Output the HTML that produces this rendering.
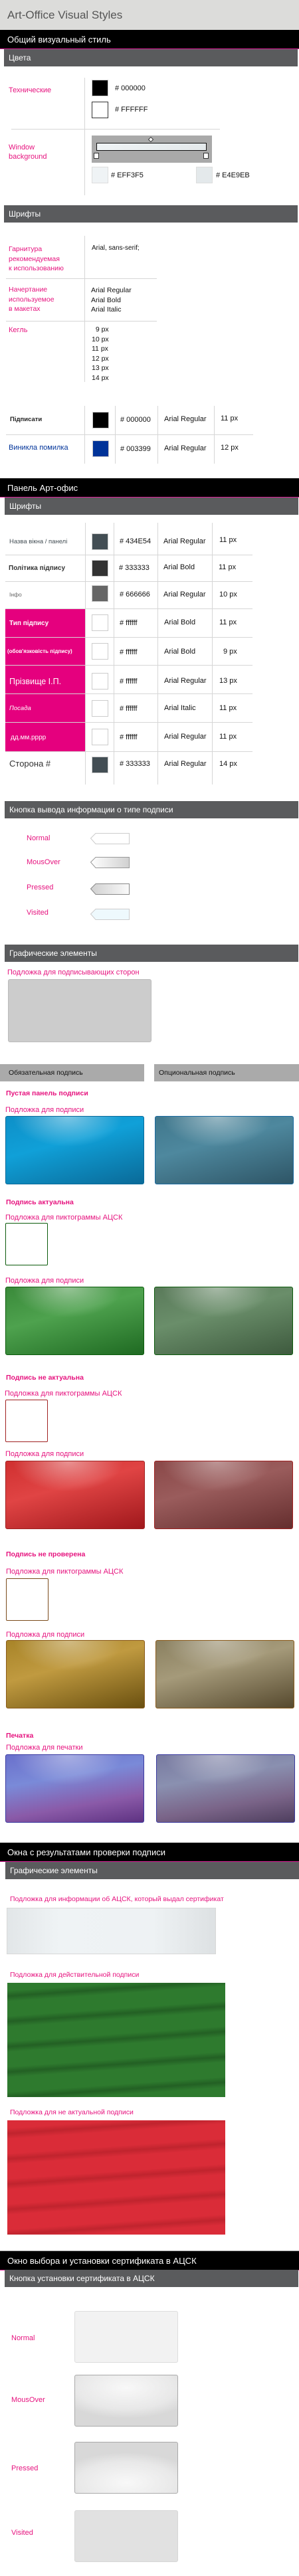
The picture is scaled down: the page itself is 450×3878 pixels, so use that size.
<!DOCTYPE html>
<html><head><meta charset="utf-8">
<style>
*{margin:0;padding:0;box-sizing:border-box}
body{width:450px;height:3878px;position:relative;background:#fff;font-family:"Liberation Sans","DejaVu Sans",sans-serif;overflow:hidden}
div{position:absolute}
.t{line-height:16px;white-space:nowrap;font-size:11px;color:#111}
.p{color:#e6127e}
.blk{left:0;width:450px;height:29px;background:#000;color:#fff;font-size:13px;line-height:29px;padding-left:11px;border-bottom:1px solid #e0209a}
.gr{left:6px;width:442px;height:26px;background:#5a5b5d;color:#fff;font-size:12px;line-height:26px;padding-left:7px}
.vl{width:1px;background:#d6d6d6}
.hl{height:1px;background:#d6d6d6}
.sw{width:25px;height:25px;border:1px solid #ccc}
.gl{border-radius:3px;width:209px;height:103px}
.pk{left:8px;width:120px;background:#e5007e;color:#fff}
.ab{width:156px;height:78px;border-radius:3px}
</style></head><body>

<div style="left:0;top:0;width:450px;height:45px;background:#dcdcda"></div>
<div class="t" style="left:11px;top:12px;font-size:17px;line-height:22px;color:#555">Art-Office Visual Styles</div>
<div class="blk" style="top:45px">Общий визуальный стиль</div>
<div class="gr" style="top:74px">Цвета</div>

<div class="t p" style="left:13px;top:128px;font-size:11px">Технические</div>
<div class="vl" style="left:127px;top:117px;height:177px"></div>
<div class="sw" style="left:138px;top:120px;background:#000"></div>
<div class="t" style="left:173px;top:125px">#&nbsp;000000</div>
<div class="sw" style="left:138px;top:153px;background:#fff;border-color:#333"></div>
<div class="t" style="left:173px;top:157px">#&nbsp;FFFFFF</div>
<div class="hl" style="left:17px;top:194px;width:314px"></div>
<div style="left:138px;top:204px;width:181px;height:41px;background:#a9a9a9"></div>
<div style="left:145px;top:215px;width:166px;height:12px;background:linear-gradient(90deg,#eff3f5,#e4e9eb);border:1px solid #111"></div>
<div style="left:224px;top:207px;width:6px;height:6px;background:#fff;border:1px solid #333;transform:rotate(45deg)"></div>
<div style="left:141px;top:230px;width:8px;height:9px;background:#fff;border:1px solid #333"></div>
<div style="left:306px;top:230px;width:8px;height:9px;background:#fff;border:1px solid #333"></div>
<div class="t p" style="left:13px;top:215px;font-size:11px;line-height:14px">Window<br>background</div>
<div class="sw" style="left:138px;top:251px;background:#eff3f5;border-color:#ddd"></div>
<div class="t" style="left:167px;top:256px">#&nbsp;EFF3F5</div>
<div class="sw" style="left:295px;top:251px;background:#e4e9eb;border-color:#ddd"></div>
<div class="t" style="left:325px;top:256px">#&nbsp;E4E9EB</div>

<div class="gr" style="top:309px">Шрифты</div>
<div class="vl" style="left:127px;top:355px;height:220px"></div>
<div class="t p" style="left:13px;top:368px;line-height:14.5px;font-size:10.5px">Гарнитура<br>рекомендуемая<br>к использованию</div>
<div class="t" style="left:138px;top:366px;font-size:10px">Arial, sans-serif;</div>
<div class="hl" style="left:9px;top:419px;width:227px"></div>
<div class="t p" style="left:13px;top:429px;line-height:14.5px;font-size:10.5px">Начертание<br>используемое<br>в макетах</div>
<div class="t" style="left:137px;top:430px;line-height:14.5px;font-size:10.5px">Arial Regular<br>Arial Bold<br>Arial Italic</div>
<div class="hl" style="left:9px;top:483px;width:227px"></div>
<div class="t p" style="left:13px;top:489px;font-size:11px">Кегль</div>
<div class="t" style="left:138px;top:489px;line-height:14.5px;font-size:10.5px">&nbsp;&nbsp;9 px<br>10 px<br>11 px<br>12 px<br>13 px<br>14 px</div>

<div class="vl" style="left:127px;top:611px;height:87px"></div>
<div class="vl" style="left:173px;top:611px;height:87px"></div>
<div class="vl" style="left:237px;top:611px;height:87px"></div>
<div class="vl" style="left:322px;top:611px;height:87px"></div>
<div class="hl" style="left:9px;top:654px;width:372px"></div>
<div class="t" style="left:15px;top:624px;font-size:9.5px;font-weight:bold;color:#222">Підписати</div>
<div class="sw" style="left:139px;top:620px;background:#000"></div>
<div class="t" style="left:181px;top:624px">#&nbsp;000000</div>
<div class="t" style="left:247px;top:623px">Arial Regular</div>
<div class="t" style="left:332px;top:622px">11 px</div>
<div class="t" style="left:13px;top:666px;color:#003399">Виникла помилка</div>
<div class="sw" style="left:139px;top:663px;background:#003399"></div>
<div class="t" style="left:181px;top:668px">#&nbsp;003399</div>
<div class="t" style="left:247px;top:667px">Arial Regular</div>
<div class="t" style="left:332px;top:666px">12 px</div>

<div class="blk" style="top:720px">Панель Арт-офис</div>
<div class="gr" style="top:749px;left:7px">Шрифты</div>

<div class="pk" style="top:916px;height:215px"></div>
<div class="vl" style="left:128px;top:787px;height:394px"></div>
<div class="vl" style="left:171px;top:787px;height:394px"></div>
<div class="vl" style="left:237px;top:787px;height:394px"></div>
<div class="vl" style="left:319px;top:787px;height:394px"></div>
<div class="hl" style="left:8px;top:835px;width:372px"></div>
<div class="hl" style="left:8px;top:875px;width:372px"></div>
<div class="hl" style="left:8px;top:916px;width:372px"></div>
<div class="hl" style="left:8px;top:959px;width:372px"></div>
<div class="hl" style="left:8px;top:1001px;width:372px"></div>
<div class="hl" style="left:8px;top:1044px;width:372px"></div>
<div class="hl" style="left:8px;top:1087px;width:372px"></div>
<div class="hl" style="left:8px;top:1131px;width:372px"></div>

<div class="t" style="left:14px;top:808px;font-size:9.5px;color:#434e54">Назва вікна / панелі</div>
<div class="t" style="left:13px;top:848px;font-size:10px;font-weight:bold;color:#333">Політика підпису</div>
<div class="t" style="left:14px;top:887px;font-size:8.5px;color:#666">Інфо</div>
<div class="t" style="left:14px;top:931px;font-size:10px;font-weight:bold;color:#fff">Тип підпису</div>
<div class="t" style="left:11px;top:973px;font-size:8px;font-weight:bold;color:#fff">(обов'язковість підпису)</div>
<div class="t" style="left:14px;top:1018px;font-size:12.5px;color:#fff">Прізвище І.П.</div>
<div class="t" style="left:14px;top:1059px;font-size:9.5px;font-style:italic;color:#fff">Посада</div>
<div class="t" style="left:16px;top:1103px;font-size:10px;color:#fff">дд.мм.рррр</div>
<div class="t" style="left:14px;top:1142px;font-size:13px;color:#333">Сторона #</div>

<div class="sw" style="left:138px;top:803px;background:#434e54"></div>
<div class="sw" style="left:138px;top:843px;background:#333"></div>
<div class="sw" style="left:138px;top:881px;background:#666"></div>
<div class="sw" style="left:138px;top:925px;background:#fff"></div>
<div class="sw" style="left:138px;top:968px;background:#fff"></div>
<div class="sw" style="left:138px;top:1013px;background:#fff"></div>
<div class="sw" style="left:138px;top:1054px;background:#fff"></div>
<div class="sw" style="left:138px;top:1097px;background:#fff"></div>
<div class="sw" style="left:138px;top:1139px;background:#434e54"></div>

<div class="t" style="left:180px;top:807px">#&nbsp;434E54</div>
<div class="t" style="left:179px;top:847px">#&nbsp;333333</div>
<div class="t" style="left:180px;top:887px">#&nbsp;666666</div>
<div class="t" style="left:180px;top:930px">#&nbsp;ffffff</div>
<div class="t" style="left:180px;top:974px">#&nbsp;ffffff</div>
<div class="t" style="left:180px;top:1018px">#&nbsp;ffffff</div>
<div class="t" style="left:180px;top:1059px">#&nbsp;ffffff</div>
<div class="t" style="left:180px;top:1102px">#&nbsp;ffffff</div>
<div class="t" style="left:180px;top:1142px">#&nbsp;333333</div>

<div class="t" style="left:246px;top:807px">Arial Regular</div>
<div class="t" style="left:246px;top:846px">Arial Bold</div>
<div class="t" style="left:246px;top:887px">Arial Regular</div>
<div class="t" style="left:247px;top:929px">Arial Bold</div>
<div class="t" style="left:247px;top:973px">Arial Bold</div>
<div class="t" style="left:247px;top:1017px">Arial Regular</div>
<div class="t" style="left:247px;top:1058px">Arial Italic</div>
<div class="t" style="left:247px;top:1101px">Arial Regular</div>
<div class="t" style="left:247px;top:1142px">Arial Regular</div>

<div class="t" style="left:330px;top:805px">11 px</div>
<div class="t" style="left:329px;top:846px">11 px</div>
<div class="t" style="left:330px;top:887px">10 px</div>
<div class="t" style="left:330px;top:929px">11 px</div>
<div class="t" style="left:336px;top:973px">9 px</div>
<div class="t" style="left:330px;top:1017px">13 px</div>
<div class="t" style="left:330px;top:1058px">11 px</div>
<div class="t" style="left:330px;top:1101px">11 px</div>
<div class="t" style="left:330px;top:1142px">14 px</div>

<div class="gr" style="top:1206px;left:7px">Кнопка вывода информации о типе подписи</div>
<div class="t p" style="left:40px;top:1254px">Normal</div>
<div class="t p" style="left:40px;top:1290px">MousOver</div>
<div class="t p" style="left:40px;top:1328px">Pressed</div>
<div class="t p" style="left:40px;top:1366px">Visited</div>
<svg style="position:absolute;left:134px;top:1252px" width="64" height="140">
<defs>
<linearGradient id="bm" x1="0" x2="1"><stop offset="0" stop-color="#fff"/><stop offset="1" stop-color="#d0d0d0"/></linearGradient>
<linearGradient id="bp" x1="0" x2="1"><stop offset="0" stop-color="#d0d0d0"/><stop offset="1" stop-color="#fafafa"/></linearGradient>
</defs>
<path d="M2.5 10 L10 2.5 H60.5 V18.5 H10 Z" fill="#fff" stroke="#ccc"/>
<path d="M2.5 46 L10 38.5 H60.5 V54.5 H10 Z" fill="url(#bm)" stroke="#999"/>
<path d="M2.5 86 L10 78.5 H60.5 V94.5 H10 Z" fill="url(#bp)" stroke="#888"/>
<path d="M2.5 124 L10 116.5 H60.5 V132.5 H10 Z" fill="#eef9fd" stroke="#ccc"/>
</svg>

<div class="gr" style="top:1422px;left:7px">Графические элементы</div>
<div class="t p" style="left:11px;top:1456px">Подложка для подписывающих сторон</div>
<div style="left:12px;top:1474px;width:216px;height:95px;background:#ccc;border:1px solid #bbb;border-radius:3px"></div>

<div style="left:0;top:1602px;width:217px;height:26px;background:#aaa"></div>
<div style="left:232px;top:1602px;width:218px;height:26px;background:#aaa"></div>
<div class="t" style="left:13px;top:1607px;font-size:10.5px">Обязательная подпись</div>
<div class="t" style="left:239px;top:1607px;font-size:10.5px">Опциональная подпись</div>

<div class="t p" style="left:9px;top:1638px;font-weight:bold;font-size:10.5px">Пустая панель подписи</div>
<div class="t p" style="left:8px;top:1663px">Подложка для подписи</div>
<div class="gl" style="left:8px;top:1680px;border:1px solid #0a6a9a;background:radial-gradient(ellipse 40% 45% at 45% 0%,rgba(255,255,255,.45),transparent),linear-gradient(165deg,#0e90c8,#10a0d8 40%,#0a6a98)"></div>
<div class="gl" style="left:233px;top:1680px;border:1px solid #1a6aa0;background:radial-gradient(ellipse 40% 45% at 45% 0%,rgba(255,255,255,.45),transparent),linear-gradient(165deg,#40778c,#4e889e 40%,#2e5566)"></div>

<div class="t p" style="left:9px;top:1802px;font-weight:bold;font-size:10.5px">Подпись актуальна</div>
<div class="t p" style="left:8px;top:1825px">Подложка для пиктограммы АЦСК</div>
<div style="left:8px;top:1841px;width:64px;height:64px;border:1px solid #0a5a0a;border-radius:2px"></div>
<div class="t p" style="left:8px;top:1920px">Подложка для подписи</div>
<div class="gl" style="left:8px;top:1937px;border:1px solid #0a5a0a;background:radial-gradient(ellipse 40% 45% at 45% 0%,rgba(255,255,255,.45),transparent),linear-gradient(165deg,#3a8a3a,#4ea24e 40%,#1f6a22)"></div>
<div class="gl" style="left:232px;top:1937px;border:1px solid #0a5a0a;background:radial-gradient(ellipse 40% 45% at 45% 0%,rgba(255,255,255,.45),transparent),linear-gradient(165deg,#5a7a5a,#6a8e6a 40%,#3e5a3e)"></div>

<div class="t p" style="left:9px;top:2066px;font-weight:bold;font-size:10.5px">Подпись не актуальна</div>
<div class="t p" style="left:7px;top:2090px">Подложка для пиктограммы АЦСК</div>
<div style="left:8px;top:2107px;width:64px;height:64px;border:1px solid #a02020;border-radius:2px"></div>
<div class="t p" style="left:8px;top:2181px">Подложка для подписи</div>
<div class="gl" style="left:8px;top:2199px;width:210px;border:1px solid #a02020;background:radial-gradient(ellipse 40% 45% at 45% 0%,rgba(255,255,255,.45),transparent),linear-gradient(165deg,#d03030,#e04444 40%,#a0181c)"></div>
<div class="gl" style="left:232px;top:2199px;border:1px solid #a02020;background:radial-gradient(ellipse 40% 45% at 45% 0%,rgba(255,255,255,.4),transparent),linear-gradient(165deg,#8a4848,#9a5c5c 40%,#652e2e)"></div>

<div class="t p" style="left:9px;top:2332px;font-weight:bold;font-size:10.5px">Подпись не проверена</div>
<div class="t p" style="left:9px;top:2358px">Подложка для пиктограммы АЦСК</div>
<div style="left:9px;top:2376px;width:64px;height:64px;border:1px solid #7a4a1a;border-radius:2px"></div>
<div class="t p" style="left:9px;top:2453px">Подложка для подписи</div>
<div class="gl" style="left:9px;top:2469px;border:1px solid #8a5a1a;background:radial-gradient(ellipse 40% 45% at 45% 0%,rgba(255,255,255,.4),transparent),linear-gradient(165deg,#a88428,#c09a40 40%,#6a5010)"></div>
<div class="gl" style="left:234px;top:2469px;border:1px solid #8a5a1a;background:radial-gradient(ellipse 40% 45% at 45% 0%,rgba(255,255,255,.4),transparent),linear-gradient(165deg,#8a8060,#a59a7a 40%,#56492e)"></div>

<div class="t p" style="left:9px;top:2605px;font-weight:bold;font-size:10.5px">Печатка</div>
<div class="t p" style="left:9px;top:2623px">Подложка для печатки</div>
<div class="gl" style="left:8px;top:2641px;border:1px solid #3a3aa0;background:radial-gradient(ellipse 40% 45% at 45% 0%,rgba(255,255,255,.4),transparent),linear-gradient(170deg,#6a70cc,#7a8ad8 35%,#8a5aa8 70%,#5e3282)"></div>
<div class="gl" style="left:235px;top:2641px;border:1px solid #3a3aa0;background:radial-gradient(ellipse 40% 45% at 45% 0%,rgba(255,255,255,.4),transparent),linear-gradient(170deg,#787aa0,#8a90b0 35%,#7a6488 70%,#4e3e5e)"></div>

<div class="blk" style="top:2774px">Окна с результатами проверки подписи</div>
<div class="gr" style="top:2803px;left:8px">Графические элементы</div>
<div class="t p" style="left:15px;top:2851px;font-size:10.5px">Подложка для информации об АЦСК, который выдал сертификат</div>
<div style="left:10px;top:2872px;width:315px;height:70px;border:1px solid #d8d8d8;background:linear-gradient(90deg,#e2e6e8,#eff3f5 25%,#eef2f4 70%,#dde1e3)"></div>
<div class="t p" style="left:15px;top:2965px;font-size:10.5px">Подложка для действительной подписи</div>
<div style="left:11px;top:2985px;width:328px;height:172px;background:repeating-linear-gradient(176deg,#2e7a2e 0,#2e7a2e 12px,#236024 20px,#2e7a2e 28px,#2e7a2e 38px)"></div>
<div class="t p" style="left:15px;top:3172px;font-size:10.5px">Подложка для не актуальной подписи</div>
<div style="left:11px;top:3192px;width:328px;height:172px;background:repeating-linear-gradient(176deg,#da2c38 0,#da2c38 12px,#c0242e 20px,#da2c38 28px,#da2c38 38px)"></div>

<div style="left:0;top:3388px;width:450px;height:1px;background:#aaa"></div>
<div class="blk" style="top:3389px">Окно выбора и установки сертификата в АЦСК</div>
<div class="gr" style="top:3417px;left:7px">Кнопка установки сертификата в АЦСК</div>

<div class="t p" style="left:17px;top:3512px">Normal</div>
<div class="ab" style="left:112px;top:3479px;background:#f2f2f2;border:1px solid #ddd"></div>
<div class="t p" style="left:17px;top:3605px">MousOver</div>
<div class="ab" style="left:112px;top:3575px;border:1px solid #aaa;background:radial-gradient(ellipse 70% 60% at 50% 25%,#f8f8f8,#e8e8e8 70%,#d8d8d8)"></div>
<div class="t p" style="left:17px;top:3708px">Pressed</div>
<div class="ab" style="left:112px;top:3676px;border:1px solid #aaa;background:radial-gradient(ellipse 70% 60% at 50% 80%,#f8f8f8,#e8e8e8 70%,#d8d8d8)"></div>
<div class="t p" style="left:17px;top:3805px">Visited</div>
<div class="ab" style="left:112px;top:3779px;background:#e1e1e1;border:1px solid #d6d6d6"></div>

</body></html>
